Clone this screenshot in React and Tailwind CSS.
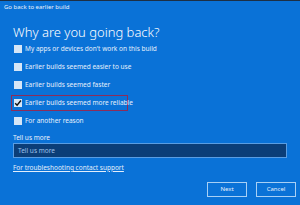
import React from 'react';

const reasons = [
  { label: "My apps or devices don't work on this build", checked: false },
  { label: 'Earlier builds seemed easier to use', checked: false },
  { label: 'Earlier builds seemed faster', checked: false },
  { label: 'Earlier builds seemed more reliable', checked: true },
  { label: 'For another reason', checked: false },
];

const Check = ({ checked }) => (
  <span className="w-[8px] h-[8px] bg-[#d6e6f6] flex items-center justify-center shrink-0">
    {checked && (
      <svg width="8" height="8" viewBox="0 0 8 8">
        <path d="M1.2 4.2 L3.1 6.2 L6.9 1.5" fill="none" stroke="#111" strokeWidth="1.4" />
      </svg>
    )}
  </span>
);

export default function App() {
  return (
    <div
      className="w-[300px] h-[205px] bg-[#0a72d7] overflow-hidden flex flex-col text-white"
      style={{ fontFamily: '"Noto Sans", "Open Sans", sans-serif' }}
    >
      {/* top edge */}
      <div className="h-px bg-[#1d2f44]" />

      {/* window title */}
      <div className="pl-[4px] mt-[2px] text-[6px] leading-[8px] text-[#e8f1fb]">
        Go back to earlier build
      </div>

      {/* heading */}
      <h1 className="pl-[13px] mt-[13px] text-[13px] leading-[16px] font-light">
        Why are you going back?
      </h1>

      {/* reasons */}
      <div className="pl-[11px] mt-[1px] flex flex-col gap-[2px]">
        {reasons.map((r) => (
          <div
            key={r.label}
            className={
              'h-[16px] w-[117px] flex items-center gap-[3px] pl-[2px] border whitespace-nowrap ' +
              (r.checked ? 'border-[#8c2d5a]' : 'border-transparent')
            }
          >
            <Check checked={r.checked} />
            <span className="text-[6.5px] leading-[8px] text-[#e6f0fb]">{r.label}</span>
          </div>
        ))}
      </div>

      {/* tell us more */}
      <div className="pl-[13px] pr-[13px] mt-[5px]">
        <div className="text-[6.5px] leading-[8px] text-[#eaf3fc]">Tell us more</div>
        <div className="mt-[1px] h-[15px] bg-[#0b3e78] border border-[#5a9de2] flex items-center pl-[4px]">
          <span className="text-[6.5px] text-[#9fc3ea]">Tell us more</span>
        </div>
        <a className="block mt-[6px] text-[6.5px] leading-[8px] underline text-[#e3eefb]">
          For troubleshooting contact support
        </a>
      </div>

      {/* buttons */}
      <div className="mt-[10px] pr-[4px] flex justify-end gap-[9px]">
        <button className="w-[40px] h-[15px] border border-[#a8d0f5] text-[6px] text-[#e8f1fb]">
          Next
        </button>
        <button className="w-[40px] h-[15px] border border-[#a8d0f5] text-[6px] text-[#e8f1fb]">
          Cancel
        </button>
      </div>
    </div>
  );
}
